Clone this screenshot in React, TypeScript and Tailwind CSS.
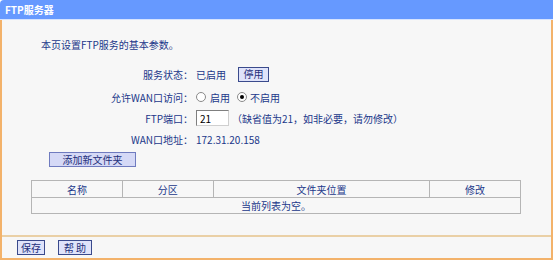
import React from "react";

const font = { fontFamily: '"Noto Sans CJK SC", "Noto Sans", sans-serif' };

const Btn = ({ children, className = "" }: { children: React.ReactNode; className?: string }) => (
  <div
    className={
      "flex items-center justify-center border border-[#3a4a8c] bg-[#dfe3fa] text-[10px] leading-none text-[#1e2f7a] " +
      className
    }
  >
    {children}
  </div>
);

const Radio = ({ checked }: { checked?: boolean }) => (
  <span className="flex h-[10px] w-[10px] items-center justify-center rounded-full border border-[#8a8a8a] bg-white">
    {checked && <span className="h-[4px] w-[4px] rounded-full bg-black" />}
  </span>
);

const Row = ({ label, h, children }: { label: string; h: string; children: React.ReactNode }) => (
  <div className={"flex items-center " + h}>
    <div className="w-[191px] text-right">{label}</div>
    <div className="ml-[3px] flex items-center">{children}</div>
  </div>
);

export default function App() {
  return (
    <div className="h-[260px] w-[553px] overflow-hidden bg-white text-[10px] text-[#22388a]" style={font}>
      {/* title bar */}
      <div className="h-[19px] rounded-tl-[4px] bg-[#6699ff] pl-[5px] text-[10px] font-bold leading-[19px] text-white">
        FTP服务器
      </div>
      <div className="h-[1px] bg-[#d6e3ff]" />

      {/* main panel */}
      <div className="flex h-[215px] flex-col border-x-2 border-[#f3b26a] bg-[#f7f7f7]">
        <div className="mt-[18px] h-[14px] pl-[39px] leading-[14px]">本页设置FTP服务的基本参数。</div>

        <div className="mt-[10px]">
          <Row label="服务状态：" h="h-[24px]">
            <span>已启用</span>
            <Btn className="ml-[12px] h-[15px] w-[31px]">停用</Btn>
          </Row>
          <Row label="允许WAN口访问：" h="h-[22px]">
            <Radio />
            <span className="ml-[4px]">启用</span>
            <span className="ml-[7px]">
              <Radio checked />
            </span>
            <span className="ml-[3px]">不启用</span>
          </Row>
          <Row label="FTP端口：" h="h-[20px]">
            <div className="flex h-[16px] w-[33px] items-center border border-[#7f7f7f] border-b-[#cfcfcf] border-r-[#cfcfcf] bg-white pl-[3px] text-black">
              21
            </div>
            <span className="ml-[3px]">（缺省值为21，如非必要，请勿修改）</span>
          </Row>
          <Row label="WAN口地址：" h="h-[22px]">
            <span>172.31.20.158</span>
          </Row>
        </div>

        <div className="ml-[47px] mt-[2px] flex h-[15px] w-[87px] items-center justify-center border border-[#6f7bbf] bg-[#d5d9f6] text-[10px] text-[#1e2f7a]">
          添加新文件夹
        </div>

        <table className="ml-[29px] mt-[13px] w-[490px] border-collapse border border-[#a8a8a8] text-[10px]">
          <tbody>
            <tr className="h-[17px]">
              <td className="w-[91px] border border-[#b5b5b5] text-center">名称</td>
              <td className="w-[91px] border border-[#b5b5b5] text-center">分区</td>
              <td className="w-[217px] border border-[#b5b5b5] text-center">文件夹位置</td>
              <td className="w-[91px] border border-[#b5b5b5] text-center">修改</td>
            </tr>
            <tr className="h-[15px]">
              <td colSpan={4} className="border border-[#b5b5b5] text-center">
                当前列表为空。
              </td>
            </tr>
          </tbody>
        </table>
      </div>

      {/* separator */}
      <div className="h-[2px] border-x-2 border-[#f3b26a] bg-[#ead0a6]" />

      {/* bottom buttons */}
      <div className="flex h-[23px] items-center gap-[13px] border-x-2 border-b-2 border-[#f3b26a] bg-[#f7f7f7] pl-[15px]">
        <Btn className="h-[15px] w-[28px]">保存</Btn>
        <Btn className="h-[15px] w-[34px]">帮 助</Btn>
      </div>
    </div>
  );
}
